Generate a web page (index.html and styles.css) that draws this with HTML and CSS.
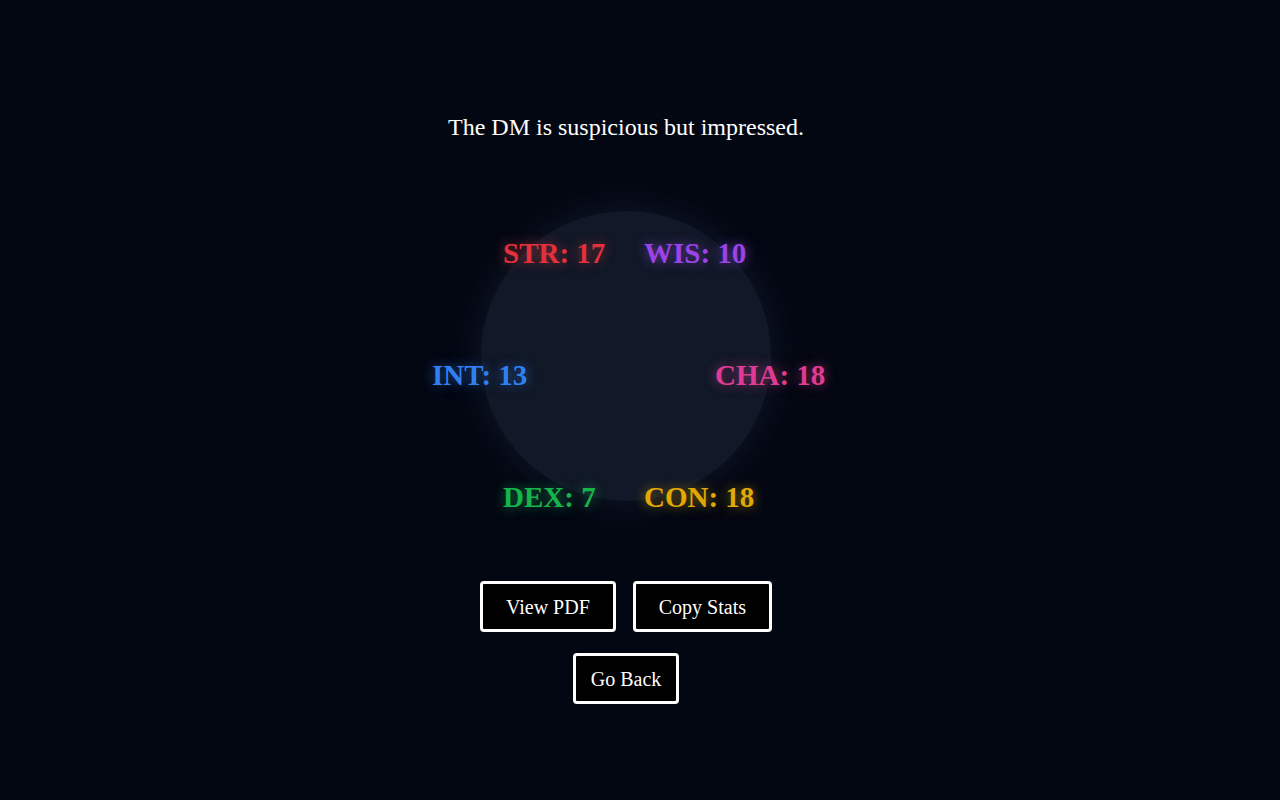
FILE: index.html
```html
<!DOCTYPE html>
<html lang="en">
<head>
<meta charset="utf-8">
<title>Character Stats</title>
<link rel="stylesheet" href="styles.css">
</head>
<body>
<main class="page">
  <p class="verdict">The DM is suspicious but impressed.</p>
  <div class="wheel">
    <div class="orb"></div>
    <span class="stat stat-str">STR: 17</span>
    <span class="stat stat-wis">WIS: 10</span>
    <span class="stat stat-int">INT: 13</span>
    <span class="stat stat-cha">CHA: 18</span>
    <span class="stat stat-dex">DEX: 7</span>
    <span class="stat stat-con">CON: 18</span>
  </div>
  <div class="actions">
    <div class="row">
      <button class="btn btn-wide">View PDF</button>
      <button class="btn btn-wide">Copy Stats</button>
    </div>
    <div class="row">
      <button class="btn btn-narrow">Go Back</button>
    </div>
  </div>
</main>
</body>
</html>
```

FILE: styles.css
```css
html, body {
  margin: 0;
  padding: 0;
  background: #030712;
  height: 100%;
}

body {
  font-family: "Liberation Serif", "Times New Roman", serif;
  color: #ffffff;
}

.page {
  display: flex;
  flex-direction: column;
  align-items: center;
  padding: 111px 28px 0 0;
}

.verdict {
  margin: 0;
  font-size: 24px;
  line-height: 32px;
}

.wheel {
  position: relative;
  width: 290px;
  height: 290px;
  margin-top: 68px;
}

.orb {
  position: absolute;
  inset: 0;
  border-radius: 50%;
  background: #111827;
  box-shadow: 0 0 30px 6px rgba(20, 28, 46, 0.6);
}

.stat {
  position: absolute;
  font-size: 29px;
  line-height: 32px;
  font-weight: bold;
  white-space: nowrap;
}

.stat-str { left: 22px;  top: 26px;  color: #e3303b; text-shadow: 0 0 12px rgba(239, 68, 68, 0.6); }
.stat-wis { left: 163px; top: 26px;  color: #9b43e6; text-shadow: 0 0 12px rgba(168, 85, 247, 0.6); }
.stat-int { left: -49px; top: 148px; color: #3080ef; text-shadow: 0 0 12px rgba(59, 130, 246, 0.6); }
.stat-cha { left: 234px; top: 148px; color: #e03b93; text-shadow: 0 0 12px rgba(236, 72, 153, 0.6); }
.stat-dex { left: 22px;  top: 270px; color: #16b44b; text-shadow: 0 0 12px rgba(34, 197, 94, 0.6); }
.stat-con { left: 163px; top: 270px; color: #e2a806; text-shadow: 0 0 12px rgba(234, 179, 8, 0.6); }

.actions {
  display: flex;
  flex-direction: column;
  align-items: center;
  gap: 21px;
  margin-top: 80px;
}

.row {
  display: flex;
  gap: 17px;
}

.btn {
  font-family: inherit;
  font-size: 20px;
  line-height: 23px;
  color: #ffffff;
  background: #000000;
  border: 3px solid #ffffff;
  border-radius: 4px;
  padding: 12px 23px 10px;
  cursor: pointer;
}

.btn-narrow {
  padding: 12px 15px 10px;
}
```
